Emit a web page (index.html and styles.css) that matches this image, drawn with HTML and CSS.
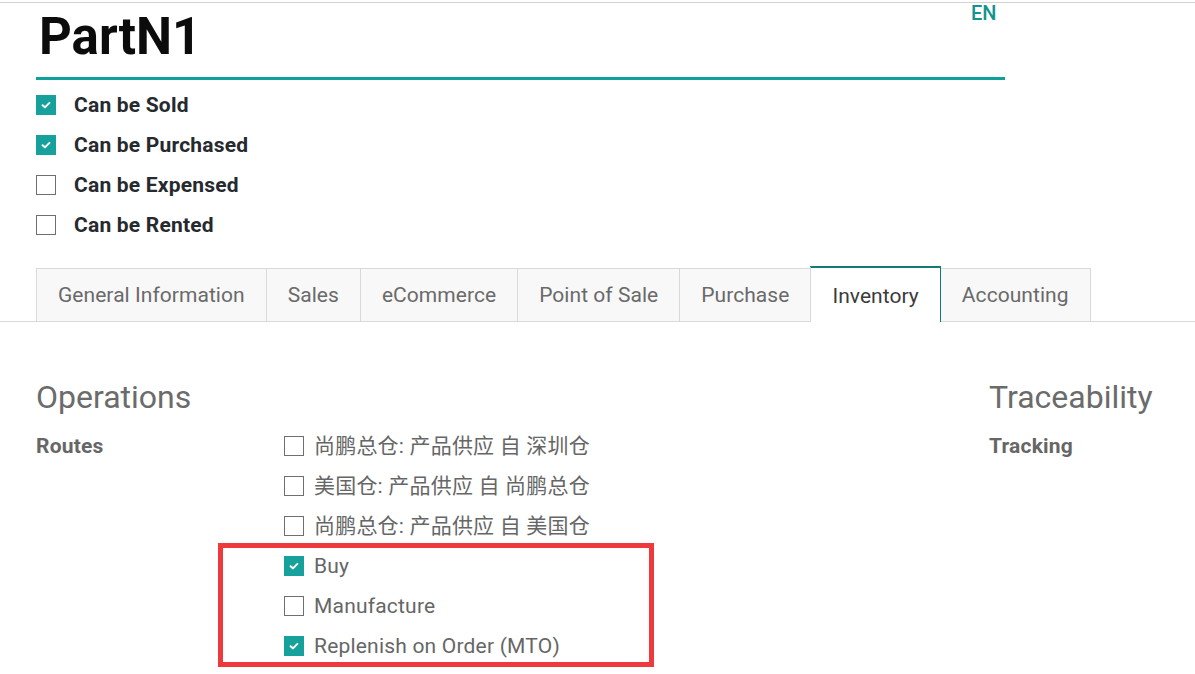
FILE: index.html
```html
<!DOCTYPE html>
<html>
<head>
<meta charset="utf-8">
<link rel="stylesheet" href="styles.css">
</head>
<body>
<div class="sheet">
  <div class="title-row">
    <div class="title">PartN1</div>
    <span class="lang">EN</span>
  </div>
  <div class="options">
    <div class="opt"><span class="cb on"><svg viewBox="0 0 20 20"><path d="M6.2 10.2 L8.8 12.6 L13.8 7.6" fill="none" stroke="#fff" stroke-width="2.2" stroke-linecap="round" stroke-linejoin="round"/></svg></span><span class="opt-label">Can be Sold</span></div>
    <div class="opt"><span class="cb on"><svg viewBox="0 0 20 20"><path d="M6.2 10.2 L8.8 12.6 L13.8 7.6" fill="none" stroke="#fff" stroke-width="2.2" stroke-linecap="round" stroke-linejoin="round"/></svg></span><span class="opt-label">Can be Purchased</span></div>
    <div class="opt"><span class="cb"></span><span class="opt-label">Can be Expensed</span></div>
    <div class="opt"><span class="cb"></span><span class="opt-label">Can be Rented</span></div>
  </div>
  <div class="tabs">
    <div class="tab">General Information</div>
    <div class="tab">Sales</div>
    <div class="tab">eCommerce</div>
    <div class="tab">Point of Sale</div>
    <div class="tab">Purchase</div>
    <div class="tab active">Inventory</div>
    <div class="tab">Accounting</div>
  </div>
  <div class="page">
    <div class="group">
      <h2 class="group-title">Operations</h2>
      <div class="field-row">
        <div class="field-label">Routes</div>
        <div class="routes">
          <div class="route"><span class="cb"></span><span class="route-text">尚鹏总仓: 产品供应 自 深圳仓</span></div>
          <div class="route"><span class="cb"></span><span class="route-text">美国仓: 产品供应 自 尚鹏总仓</span></div>
          <div class="route"><span class="cb"></span><span class="route-text">尚鹏总仓: 产品供应 自 美国仓</span></div>
          <div class="route"><span class="cb on"><svg viewBox="0 0 20 20"><path d="M6.2 10.2 L8.8 12.6 L13.8 7.6" fill="none" stroke="#fff" stroke-width="2.2" stroke-linecap="round" stroke-linejoin="round"/></svg></span><span class="route-text">Buy</span></div>
          <div class="route"><span class="cb"></span><span class="route-text">Manufacture</span></div>
          <div class="route"><span class="cb on"><svg viewBox="0 0 20 20"><path d="M6.2 10.2 L8.8 12.6 L13.8 7.6" fill="none" stroke="#fff" stroke-width="2.2" stroke-linecap="round" stroke-linejoin="round"/></svg></span><span class="route-text">Replenish on Order (MTO)</span></div>
        </div>
      </div>
    </div>
    <div class="group">
      <h2 class="group-title">Traceability</h2>
      <div class="field-row">
        <div class="field-label">Tracking</div>
      </div>
    </div>
  </div>
</div>
<div class="highlight"></div>
</body>
</html>
```
FILE: styles.css
```css
html, body {
  margin: 0;
  padding: 0;
  background: #fff;
}
body {
  font-family: Roboto, "Noto Sans CJK SC", sans-serif;
  color: #212529;
  position: relative;
  width: 1195px;
  height: 674px;
  overflow: hidden;
}
.sheet {
  margin-top: 2px;
  border-top: 1px solid #d3d3d3;
}
.title-row {
  position: relative;
  margin-left: 36px;
  width: 969px;
  padding-top: 3px;
  padding-bottom: 9px;
  border-bottom: 3px solid #0ea09b;
}
.title {
  font-size: 51px;
  font-weight: 700;
  line-height: 62px;
  color: #0c0c0c;
  padding-left: 3px;
}
.lang {
  position: absolute;
  left: 935px;
  top: -2px;
  font-size: 20px;
  font-weight: 500;
  color: #12948d;
}
.options {
  margin-top: 5px;
  padding-left: 36px;
}
.opt {
  display: flex;
  align-items: center;
  height: 40px;
}
.opt-label {
  margin-left: 18px;
  font-size: 21px;
  letter-spacing: 0.2px;
  font-weight: 700;
  color: #262a2e;
}
.cb {
  box-sizing: border-box;
  width: 20px;
  height: 20px;
  border: 1px solid #6f6f6f;
  background: #fff;
  display: inline-flex;
  flex: none;
}
.cb.on {
  border-color: #17a19c;
  background: #17a19c;
}
.cb svg {
  width: 18px;
  height: 18px;
}
.tabs {
  margin-top: 21px;
  padding-left: 36px;
  display: flex;
  align-items: flex-end;
  height: 55px;
  border-bottom: 1px solid #d9d9d9;
}
.tab {
  box-sizing: border-box;
  height: 53px;
  padding: 0 21px;
  display: flex;
  align-items: center;
  font-size: 21px;
  letter-spacing: 0.05px;
  color: #6a6a6a;
  background: #f8f8f8;
  border: 1px solid #d9d9d9;
  border-bottom: none;
  margin-right: -1px;
}
.tab.active {
  height: 56px;
  margin-bottom: -1px;
  background: #fff;
  color: #3b3b3b;
  border-top: 2px solid #117c74;
  border-right: 1px solid #117c74;
  position: relative;
  z-index: 1;
  padding-top: 1px;
}
.page {
  display: grid;
  grid-template-columns: 953px 1fr;
  padding-left: 36px;
  padding-top: 55px;
}
.group-title {
  margin: 0;
  font-size: 32px;
  font-weight: 400;
  line-height: 40px;
  color: #6b6b6b;
}
.field-row {
  margin-top: 9px;
  display: grid;
  grid-template-columns: 248px 1fr;
}
.field-label {
  font-size: 21px;
  letter-spacing: 0.2px;
  font-weight: 700;
  color: #666;
  line-height: 40px;
}
.route {
  display: flex;
  align-items: center;
  height: 40px;
  font-size: 21px;
  letter-spacing: 0.2px;
  color: #666;
}
.route-text {
  line-height: 24px;
}
.route .cb {
  margin-right: 10px;
}
.highlight {
  position: absolute;
  left: 218px;
  top: 543px;
  width: 436px;
  height: 124px;
  box-sizing: border-box;
  border: 5px solid #ef3a3d;
}
```
